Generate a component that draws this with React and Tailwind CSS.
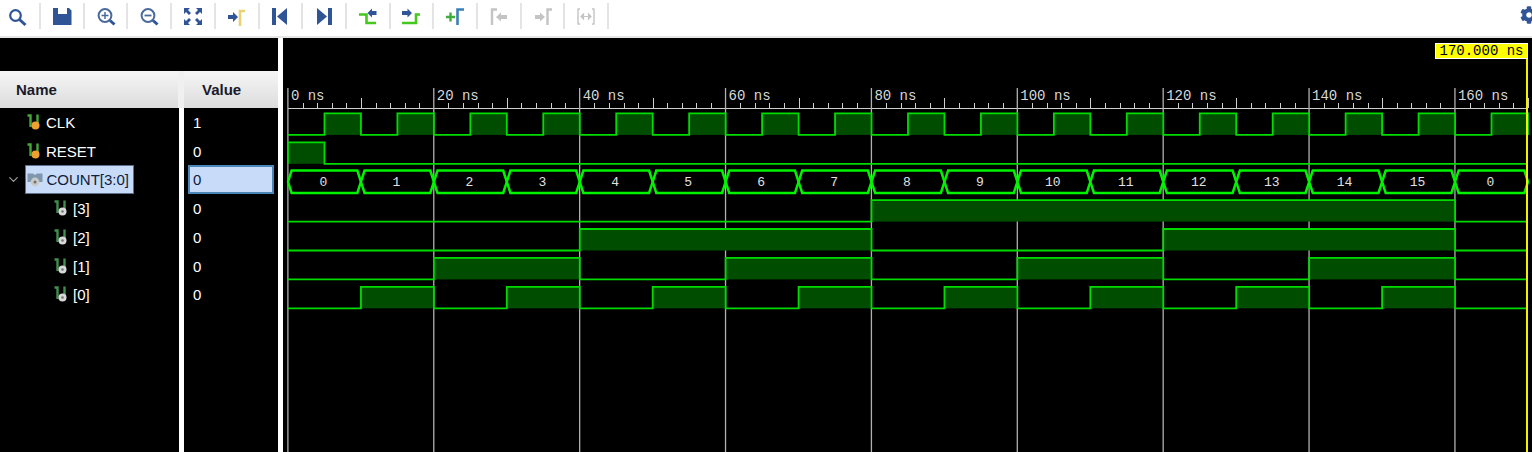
import React from 'react';
import { ChevronDown } from 'lucide-react';
import { FaCog } from 'react-icons/fa';

const BLUE = '#2f5597';
const GREEN = '#44c81e';
const GRAY = '#c4c4c4';

// x position of a time in ns
const tx = (ns) => 288 + ns * 7.294;
const ROW_H = 28.9;
const rowTop = (i) => 113.4 + i * ROW_H;
const rowBot = (i) => 134.9 + i * ROW_H;

const Ico = ({ children }) => (
  <svg width="28" height="26" viewBox="0 0 28 26" fill="none">{children}</svg>
);

const toolbarIcons = [
  <Ico key="search">
    <circle cx="11.5" cy="12.5" r="5.3" stroke={BLUE} strokeWidth="2.2" />
    <path d="M15.5 16.5 21.5 22" stroke={BLUE} strokeWidth="3" />
  </Ico>,
  <Ico key="save">
    <path d="M5 5H10V11H19V5H21L23.5 7.5V22H5Z" fill={BLUE} />
  </Ico>,
  <Ico key="zoomin">
    <circle cx="13" cy="12.5" r="6.4" stroke="#4a6a9c" strokeWidth="2" />
    <path d="M13 9V16M9.5 12.5H16.5" stroke="#4a6a9c" strokeWidth="1.5" />
    <path d="M18 17.5 22.5 21.5" stroke={BLUE} strokeWidth="3" />
  </Ico>,
  <Ico key="zoomout">
    <circle cx="13" cy="12.5" r="6.4" stroke="#4a6a9c" strokeWidth="2" />
    <path d="M9.5 12.5H16.5" stroke="#4a6a9c" strokeWidth="1.8" />
    <path d="M18 17.5 22.5 21.5" stroke={BLUE} strokeWidth="3" />
  </Ico>,
  <Ico key="fit">
    <path d="M5 5H11L9 7L12 10L10 12L7 9L5 11Z M23 5H17L19 7L16 10L18 12L21 9L23 11Z M5 22H11L9 20L12 17L10 15L7 18L5 16Z M23 22H17L19 20L16 17L18 15L21 18L23 16Z" fill={BLUE} />
  </Ico>,
  <Ico key="cursor">
    <path d="M5 12H10V9L15 14L10 19V16H5Z" fill={BLUE} />
    <path d="M17 23V8H22" stroke="#e8d274" strokeWidth="2.6" />
  </Ico>,
  <Ico key="start">
    <path d="M6 5H10V22H6ZM21 5V22L11 13.5Z" fill={BLUE} />
  </Ico>,
  <Ico key="end">
    <path d="M18 5H22V22H18ZM7 5V22L17 13.5Z" fill={BLUE} />
  </Ico>,
  <Ico key="prevtrans">
    <path d="M5 11.5H12.5V20H22" stroke={GREEN} strokeWidth="2.6" />
    <path d="M13.5 10 18 5.5V8H22.5V12H18V14.5Z" fill={BLUE} />
  </Ico>,
  <Ico key="nexttrans">
    <path d="M5 20H19V11.5H23" stroke={GREEN} strokeWidth="2.6" />
    <path d="M15 10 10.5 5.5V8H5V12H10.5V14.5Z" fill={BLUE} />
  </Ico>,
  <Ico key="addmarker">
    <path d="M5 14H14M9.5 9.5V18.5" stroke="#3fae3a" strokeWidth="2.4" />
    <path d="M16.5 22V6.5H23" stroke="#3b7fb5" strokeWidth="2.6" />
  </Ico>,
  <Ico key="prevmarker">
    <path d="M7 22V6.5H12" stroke={GRAY} strokeWidth="2.4" />
    <path d="M11 14 16 9.5V12H22V16H16V18.5Z" fill={GRAY} />
  </Ico>,
  <Ico key="nextmarker">
    <path d="M6 12H11V9.5L16 14L11 18.5V16H6Z" fill={GRAY} />
    <path d="M18.5 22V6.5H23" stroke={GRAY} strokeWidth="2.4" />
  </Ico>,
  <Ico key="swap">
    <path d="M5.5 6H8M5.5 21H8M6 6V21M20 6H22.5M20 21H22.5M22 6V21" stroke={GRAY} strokeWidth="1.4" />
    <path d="M9 13.5H19M9 13.5 11.5 11V16ZM19 13.5 16.5 11V16Z" stroke={GRAY} strokeWidth="1.2" />
  </Ico>,
];

const SignalIcon = ({ dot, wire }) => (
  <svg width="14" height="16" viewBox="0 0 14 16" fill="none" className="shrink-0">
    <path d="M0.5 1.5H3.5V13" stroke={wire} strokeWidth="2.4" />
    <path d="M10.5 0.5V9" stroke={wire} strokeWidth="2.4" />
    <circle cx="8.5" cy="11.5" r="4" fill={dot} />
    {dot === '#d8d8d8' && <circle cx="8.5" cy="11.5" r="1.3" fill="#777" />}
  </svg>
);

const BusIcon = () => (
  <svg width="16" height="16" viewBox="0 0 16 16" fill="none" className="shrink-0">
    <path d="M0.5 1.5H6L8 3L10 1.5H15.5V10H0.5Z" fill="#7f97ad" />
    <circle cx="8" cy="10" r="4.4" fill="#c9c9c9" />
    <circle cx="8" cy="10" r="1.5" fill="#6f6f6f" />
  </svg>
);

const signals = [
  { name: 'CLK', value: '1', kind: 'top' },
  { name: 'RESET', value: '0', kind: 'top' },
  { name: 'COUNT[3:0]', value: '0', kind: 'bus' },
  { name: '[3]', value: '0', kind: 'bit' },
  { name: '[2]', value: '0', kind: 'bit' },
  { name: '[1]', value: '0', kind: 'bit' },
  { name: '[0]', value: '0', kind: 'bit' },
];

const NameRow = ({ sig }) => {
  if (sig.kind === 'bus') {
    return (
      <div className="h-[28.7px] flex items-center pl-[6px]">
        <ChevronDown size={15} color="#9a9a9a" className="shrink-0" />
        <div className="ml-[3.5px] h-[28.5px] w-[109px] flex items-center gap-[4px] pl-[1px] bg-[#c8dcfa] border border-[#5a6f8a] text-[#10203a]">
          <BusIcon />
          <span className="pt-[1px]">{sig.name}</span>
        </div>
      </div>
    );
  }
  const isBit = sig.kind === 'bit';
  return (
    <div className={`h-[28.7px] flex items-center gap-[5px] ${isBit ? 'pl-[54px]' : 'pl-[27px]'}`}>
      <SignalIcon dot={isBit ? '#d8d8d8' : '#f0a030'} wire={isBit ? '#3f8f4f' : '#46a838'} />
      <span className="pt-[2px]">{sig.name}</span>
    </div>
  );
};

const ValueRow = ({ sig }) =>
  sig.kind === 'bus' ? (
    <div className="h-[28.7px] pl-[4px]">
      <div className="h-[28.5px] w-[85.5px] flex items-center pl-[3px] pt-[1px] bg-[#c8dcfa] border-2 border-[#4a86b8] text-[#10203a]">
        {sig.value}
      </div>
    </div>
  ) : (
    <div className="h-[28.7px] flex items-center pl-[9px] pt-[2px]">{sig.value}</div>
  );

// build a digital trace from the list of [start, end] high intervals
const Trace = ({ row, highs }) => {
  const top = rowTop(row);
  const bot = rowBot(row);
  const end = tx(170);
  let d = `M${tx(0)} ${bot}`;
  highs.forEach(([a, b]) => {
    d += ` H${tx(a)} V${top} H${tx(b)} V${bot}`;
  });
  d += ` H${end}`;
  return (
    <g>
      {highs.map(([a, b]) => (
        <rect key={a} x={tx(a)} y={top} width={tx(b) - tx(a)} height={bot - top} fill="#004d00" />
      ))}
      <path d={d} stroke="#00dc00" strokeWidth="1.8" fill="none" />
    </g>
  );
};

const range = (n) => [...Array(n).keys()];
const clkHighs = range(17).map((i) => [5 + i * 10, Math.min(10 + i * 10, 170)]);
const bitHighs = (bit) => {
  const step = 10 * 2 ** bit;
  return range(8)
    .map((i) => [step + i * 2 * step, 2 * step + i * 2 * step])
    .filter(([a, b]) => b <= 160);
};

const busValues = [...range(16), 0];

const Waves = () => (
  <svg width="1249" height="414" viewBox="283 38 1249 414" className="block" fontFamily="'Liberation Mono', monospace">
    {/* ruler */}
    <path d={`M${tx(0)} 108.5H1528`} stroke="#cfcfcf" strokeWidth="1.2" />
    {range(86).map((i) => {
      const x = Math.round(tx(i * 2)) + 0.5;
      if (i % 10 === 0) return null;
      return <path key={i} d={`M${x} ${i % 5 === 0 ? 98 : 103}V108`} stroke="#cfcfcf" strokeWidth="1" />;
    })}
    {range(9).map((i) => {
      const x = tx(i * 20) - 0.1;
      return (
        <g key={i}>
          <path d={`M${x} 88V452`} stroke="#b0b0b0" strokeWidth="1.3" />
          <text x={x + 3} y="99.5" fontSize="14" fill="#d8d8d8">{`${i * 20} ns`}</text>
        </g>
      );
    })}

    <Trace row={0} highs={clkHighs} />
    <Trace row={1} highs={[[0, 5]]} />

    {/* bus */}
    {busValues.map((v, i) => {
      const a = tx(i * 10);
      const b = i === 16 ? tx(170) : tx(i * 10 + 10);
      const t = rowTop(2) - 0.6;
      const bt = rowBot(2) + 0.3;
      const mid = (t + bt) / 2;
      return (
        <g key={i}>
          <path
            d={`M${a} ${mid}L${a + 3.6} ${t}H${b - 3.6}L${b} ${mid}L${b - 3.6} ${bt}H${a + 3.6}Z`}
            stroke="#00f400"
            strokeWidth="2.5"
            fill="#000"
          />
          <text x={(a + b) / 2 - 1} y={mid + 4} fontSize="13" fill="#e0e0e0" textAnchor="middle">{v}</text>
        </g>
      );
    })}

    <Trace row={3} highs={bitHighs(3)} />
    <Trace row={4} highs={bitHighs(2)} />
    <Trace row={5} highs={bitHighs(1)} />
    <Trace row={6} highs={bitHighs(0)} />

    {/* cursor */}
    <path d="M1527 58V452" stroke="#f4f000" strokeWidth="2" />
  </svg>
);

export default function App() {
  return (
    <div className="w-[1532px] h-[452px] overflow-hidden bg-black font-['Liberation_Sans',Arial,sans-serif] text-[15px]">
      {/* toolbar */}
      <div className="h-[38px] bg-white border-b-2 border-[#e6e6e6] flex items-start overflow-hidden">
        <div className="flex -ml-[2.6px] pt-[3px]">
          {toolbarIcons.map((icon, i) => (
            <div key={i} className="w-[43.7px] h-[26px] flex items-center justify-center border-r-2 border-[#e4e4e4]">
              {icon}
            </div>
          ))}
        </div>
        <FaCog size={18} color={BLUE} className="ml-auto -mr-[6px] mt-[6px] shrink-0" />
      </div>

      <div className="flex h-[414px]">
        {/* names and values */}
        <div className="w-[278px] flex flex-col">
          <div className="h-[33px]" />
          <div className="h-[37px] flex font-bold text-[#1a1a2a] bg-[#ececec]">
            <div className="w-[178px] flex items-center pl-[16px] pt-[2px] bg-gradient-to-b from-[#f6f6f6] to-[#dcdcdc]">Name</div>
            <div className="w-[6px] bg-[#f0f0f0]" />
            <div className="w-[94px] flex items-center pl-[18px] pt-[2px] bg-gradient-to-b from-[#f6f6f6] to-[#dcdcdc]">Value</div>
          </div>
          <div className="flex-1 flex text-white">
            <div className="w-[179px]">
              {signals.map((s) => <NameRow key={s.name} sig={s} />)}
            </div>
            <div className="w-[5px] bg-white" />
            <div className="w-[94px]">
              {signals.map((s) => <ValueRow key={s.name} sig={s} />)}
            </div>
          </div>
        </div>
        <div className="w-[5px] bg-white" />

        {/* wave panel */}
        <div className="relative flex-1">
          <Waves />
          <div className="absolute left-[1152px] top-[5px] w-[93px] h-[16px] bg-[#ffff00] border border-white text-black text-[14px] leading-[15px] text-center whitespace-nowrap font-['Liberation_Mono',monospace]">
            170.000 ns
          </div>
        </div>
      </div>
    </div>
  );
}
